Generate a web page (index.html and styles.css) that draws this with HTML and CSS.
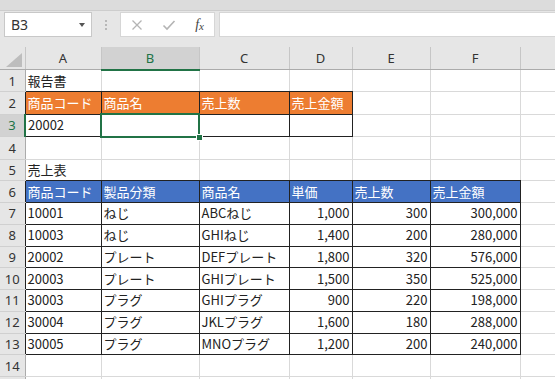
FILE: index.html
```html
<!DOCTYPE html>
<html lang="ja">
<head>
    <meta charset="UTF-8">
    <title>売上表</title>
    <link rel="stylesheet" href="styles.css">
</head>
<body>
    <div class="strip"></div>

    <!-- name box + formula bar -->
    <div class="toolbar">
        <div class="namebox">
            <span class="ref">B3</span>
            <span class="arrow"></span>
        </div>
        <div class="grip">
            <svg width="4" height="12" viewBox="0 0 4 12"><circle cx="2" cy="2" r="1" fill="#a8a8a8"/><circle cx="2" cy="6" r="1" fill="#a8a8a8"/><circle cx="2" cy="10" r="1" fill="#a8a8a8"/></svg>
        </div>
        <div class="fbtns">
            <svg class="ico" width="12" height="12" viewBox="0 0 12 12"><path d="M1.5 1.5 L10.5 10.5 M10.5 1.5 L1.5 10.5" stroke="#b4b4b4" stroke-width="1.3" fill="none"/></svg>
            <svg class="ico" width="14" height="12" viewBox="0 0 14 12"><path d="M1.5 6.5 L5 10 L12.5 2" stroke="#b4b4b4" stroke-width="1.6" fill="none"/></svg>
            <span class="fx">f<sub>x</sub></span>
        </div>
        <div class="finput"></div>
    </div>

    <table class="sheet">
        <colgroup>
            <col class="c-rh">
            <col class="c-a">
            <col class="c-b">
            <col class="c-c">
            <col class="c-d">
            <col class="c-e">
            <col class="c-f">
            <col class="c-g">
        </colgroup>
        <tr class="colhead">
            <th class="corner"><svg width="17" height="14" viewBox="0 0 17 14"><polygon points="16,0 16,14 0,14" fill="#bdbdbd"/></svg></th>
            <th>A</th>
            <th class="on">B</th>
            <th>C</th>
            <th>D</th>
            <th>E</th>
            <th>F</th>
            <th></th>
        </tr>
        <tr>
            <th class="rh">1</th>
            <td>報告書</td><td></td><td></td><td></td><td></td><td></td><td></td>
        </tr>
        <tr>
            <th class="rh dark">2</th>
            <td class="b orange">商品コード</td>
            <td class="b orange">商品名</td>
            <td class="b orange">売上数</td>
            <td class="b orange">売上金額</td>
            <td></td><td></td><td></td>
        </tr>
        <tr>
            <th class="rh on">3</th>
            <td class="b">20002</td>
            <td class="b sel"></td>
            <td class="b"></td>
            <td class="b"></td>
            <td></td><td></td><td></td>
        </tr>
        <tr>
            <th class="rh">4</th>
            <td></td><td></td><td></td><td></td><td></td><td></td><td></td>
        </tr>
        <tr>
            <th class="rh">5</th>
            <td>売上表</td><td></td><td></td><td></td><td></td><td></td><td></td>
        </tr>
        <tr>
            <th class="rh dark">6</th>
            <td class="b blue">商品コード</td>
            <td class="b blue">製品分類</td>
            <td class="b blue">商品名</td>
            <td class="b blue">単価</td>
            <td class="b blue">売上数</td>
            <td class="b blue">売上金額</td>
            <td></td>
        </tr>
        <tr>
            <th class="rh dark">7</th>
            <td class="b">10001</td><td class="b">ねじ</td><td class="b">ABCねじ</td>
            <td class="b num">1,000</td><td class="b num">300</td><td class="b num">300,000</td><td></td>
        </tr>
        <tr>
            <th class="rh dark">8</th>
            <td class="b">10003</td><td class="b">ねじ</td><td class="b">GHIねじ</td>
            <td class="b num">1,400</td><td class="b num">200</td><td class="b num">280,000</td><td></td>
        </tr>
        <tr>
            <th class="rh dark">9</th>
            <td class="b">20002</td><td class="b">プレート</td><td class="b">DEFプレート</td>
            <td class="b num">1,800</td><td class="b num">320</td><td class="b num">576,000</td><td></td>
        </tr>
        <tr>
            <th class="rh dark">10</th>
            <td class="b">20003</td><td class="b">プレート</td><td class="b">GHIプレート</td>
            <td class="b num">1,500</td><td class="b num">350</td><td class="b num">525,000</td><td></td>
        </tr>
        <tr>
            <th class="rh dark">11</th>
            <td class="b">30003</td><td class="b">プラグ</td><td class="b">GHIプラグ</td>
            <td class="b num">900</td><td class="b num">220</td><td class="b num">198,000</td><td></td>
        </tr>
        <tr>
            <th class="rh dark">12</th>
            <td class="b">30004</td><td class="b">プラグ</td><td class="b">JKLプラグ</td>
            <td class="b num">1,600</td><td class="b num">180</td><td class="b num">288,000</td><td></td>
        </tr>
        <tr>
            <th class="rh dark">13</th>
            <td class="b">30005</td><td class="b">プラグ</td><td class="b">MNOプラグ</td>
            <td class="b num">1,200</td><td class="b num">200</td><td class="b num">240,000</td><td></td>
        </tr>
        <tr>
            <th class="rh">14</th>
            <td></td><td></td><td></td><td></td><td></td><td></td><td></td>
        </tr>
        <tr>
            <th class="rh"></th>
            <td></td><td></td><td></td><td></td><td></td><td></td><td></td>
        </tr>
    </table>
</body>
</html>
```

FILE: styles.css
```css
body {
    margin: 0;
    width: 555px;
    height: 379px;
    overflow: hidden;
    background: #e6e6e6;
    font-family: "Noto Sans CJK JP", "Noto Sans", sans-serif;
}

.strip {
    height: 10px;
    background: #dcdcdc;
    border-bottom: 1px solid #cdcdcd;
}

/* Name box and formula bar */
.toolbar {
    display: flex;
    align-items: stretch;
    height: 25px;
    padding: 1px 0 10px 4px;
}

.namebox {
    width: 88px;
    display: flex;
    align-items: center;
    justify-content: space-between;
    background: #fff;
    border: 1px solid #c8c8c8;
    padding: 0 6px 0 6px;
    box-sizing: border-box;
}

.namebox .ref {
    font-family: "Noto Sans", sans-serif;
    font-size: 14px;
    color: #333;
}

.namebox .arrow {
    width: 0;
    height: 0;
    border-left: 3px solid transparent;
    border-right: 3px solid transparent;
    border-top: 4px solid #555;
    margin-top: 1px;
}

.grip {
    width: 28px;
    display: flex;
    align-items: center;
    justify-content: center;
}

.fbtns {
    width: 95px;
    display: flex;
    align-items: center;
    justify-content: space-between;
    padding: 0 10px 0 10px;
    box-sizing: border-box;
    background: #fff;
    border: 1px solid #d6d6d6;
}

.fx {
    font-family: "Liberation Serif", serif;
    font-style: italic;
    font-size: 14px;
    color: #444;
    line-height: 1;
}

.fx sub {
    font-size: 11px;
    vertical-align: -1px;
}

.finput {
    flex: 1;
    margin-left: 4px;
    background: #fff;
    border: 1px solid #d6d6d6;
    border-right: none;
}

/* Sheet grid */
.sheet {
    border-collapse: collapse;
    table-layout: fixed;
    width: 580px;
    background: #fff;
}

.sheet col { border-right: 1px solid #d9d9d9; }
.sheet tr { border-bottom: 1px solid #d9d9d9; }

.c-rh { width: 25px; }
.c-a { width: 76px; }
.c-b { width: 98px; }
.c-c { width: 90px; }
.c-d { width: 63px; }
.c-e { width: 78px; }
.c-f { width: 90px; }
.c-g { width: 60px; }

.sheet td {
    height: 20.75px;
    padding: 0 2px;
    font-size: 13px;
    line-height: 20px;
    color: #222;
    white-space: nowrap;
    overflow: hidden;
}

.colhead th {
    height: 20px;
    padding: 0;
    background: #e6e6e6;
    border-right: 1px solid #c6c6c6;
    border-bottom: 1px solid #ababab;
    font-family: "Noto Sans", sans-serif;
    font-weight: normal;
    font-size: 13px;
    color: #333;
}

.colhead th.on {
    background: #d2d2d2;
    color: #217346;
    border-bottom: 2px solid #217346;
}

.colhead th.corner {
    text-align: right;
    vertical-align: bottom;
    padding: 0 2px 2px 0;
    line-height: 0;
}

.sheet th.rh {
    padding: 0;
    background: #e6e6e6;
    border-right: 1px solid #ababab;
    border-bottom: 1px solid #d0d0d0;
    font-family: "Noto Sans", sans-serif;
    font-weight: normal;
    font-size: 13px;
    color: #333;
}

.sheet th.rh.dark { border-right-color: #222; }

.sheet th.rh.on {
    background: #d2d2d2;
    color: #217346;
    border-right: 2px solid #217346;
}

.sheet td.b { border: 1px solid #222; }

.sheet td.orange {
    background: #ed7d31;
    color: #fff;
}

.sheet td.blue {
    background: #4472c4;
    color: #fff;
}

.sheet td.num { text-align: right; }

/* active cell */
.sheet td.sel {
    position: relative;
    border: 2px solid #217346;
    overflow: visible;
}

.sheet td.sel::after {
    content: "";
    position: absolute;
    right: -5px;
    bottom: -5px;
    width: 5px;
    height: 5px;
    background: #217346;
    border: 1px solid #fff;
}
```
